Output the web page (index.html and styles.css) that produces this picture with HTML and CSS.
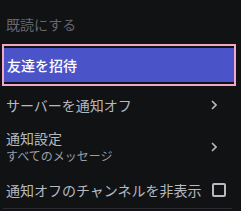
FILE: index.html
```html
<!DOCTYPE html>
<html lang="ja">
<head>
    <meta charset="UTF-8">
    <meta name="viewport" content="width=device-width, initial-scale=1.0">
    <title>メニュー</title>
    <link rel="stylesheet" href="styles.css">
</head>
<body>
    <div class="menu">
        <div class="item disabled">既読にする</div>
        <div class="item focused">友達を招待</div>
        <div class="item">
            <span>サーバーを通知オフ</span>
            <svg class="chevron" width="6" height="10" viewBox="0 0 6 10"><path d="M1 1l4 4-4 4" fill="none" stroke="currentColor" stroke-width="1.6"/></svg>
        </div>
        <div class="item tall">
            <div class="labels">
                <span>通知設定</span>
                <span class="sub">すべてのメッセージ</span>
            </div>
            <svg class="chevron" width="6" height="10" viewBox="0 0 6 10"><path d="M1 1l4 4-4 4" fill="none" stroke="currentColor" stroke-width="1.6"/></svg>
        </div>
        <div class="item">
            <span>通知オフのチャンネルを非表示</span>
            <span class="checkbox"></span>
        </div>
        <div class="separator"></div>
    </div>
</body>
</html>
```

FILE: styles.css
```css
* {
    box-sizing: border-box;
    margin: 0;
    padding: 0;
}

body {
    background-color: #111214;
    font-family: "Noto Sans CJK JP", "Noto Sans", sans-serif;
}

.menu {
    display: flex;
    flex-direction: column;
    padding: 8px 5px 0 2px;
    width: 241px;
    height: 211px;
}

.item {
    display: flex;
    align-items: center;
    justify-content: space-between;
    height: 32px;
    padding: 0 8px 0 4px;
    font-size: 14px;
    font-weight: 400;
    color: #b5bac1;
}

.disabled { color: #64666e; }

.focused {
    height: 42px;
    margin-top: 4px;
    margin-bottom: 2px;
    padding-left: 3px;
    border: 2px solid #f4a6c6;
    background-color: #4b53c8;
    box-shadow: inset 0 2px 0 #111214, inset 0 -2px 0 #111214;
    font-weight: 500;
    color: #ffffff;
}

.item:nth-child(3) { height: 34px; }

.tall {
    height: 50px;
    margin-bottom: 2px;
}

.labels {
    display: flex;
    flex-direction: column;
    line-height: 18px;
}

.sub {
    font-size: 12px;
    color: #9a9ea6;
}

.chevron {
    margin-right: 11px;
    color: #b5bac1;
}

.checkbox {
    width: 14px;
    height: 14px;
    margin-right: 2px;
    border: 2px solid #b5bac1;
    border-radius: 2px;
}

.separator {
    height: 1px;
    margin: 2px 4px 0 1px;
    background-color: #2a2b30;
}
```
